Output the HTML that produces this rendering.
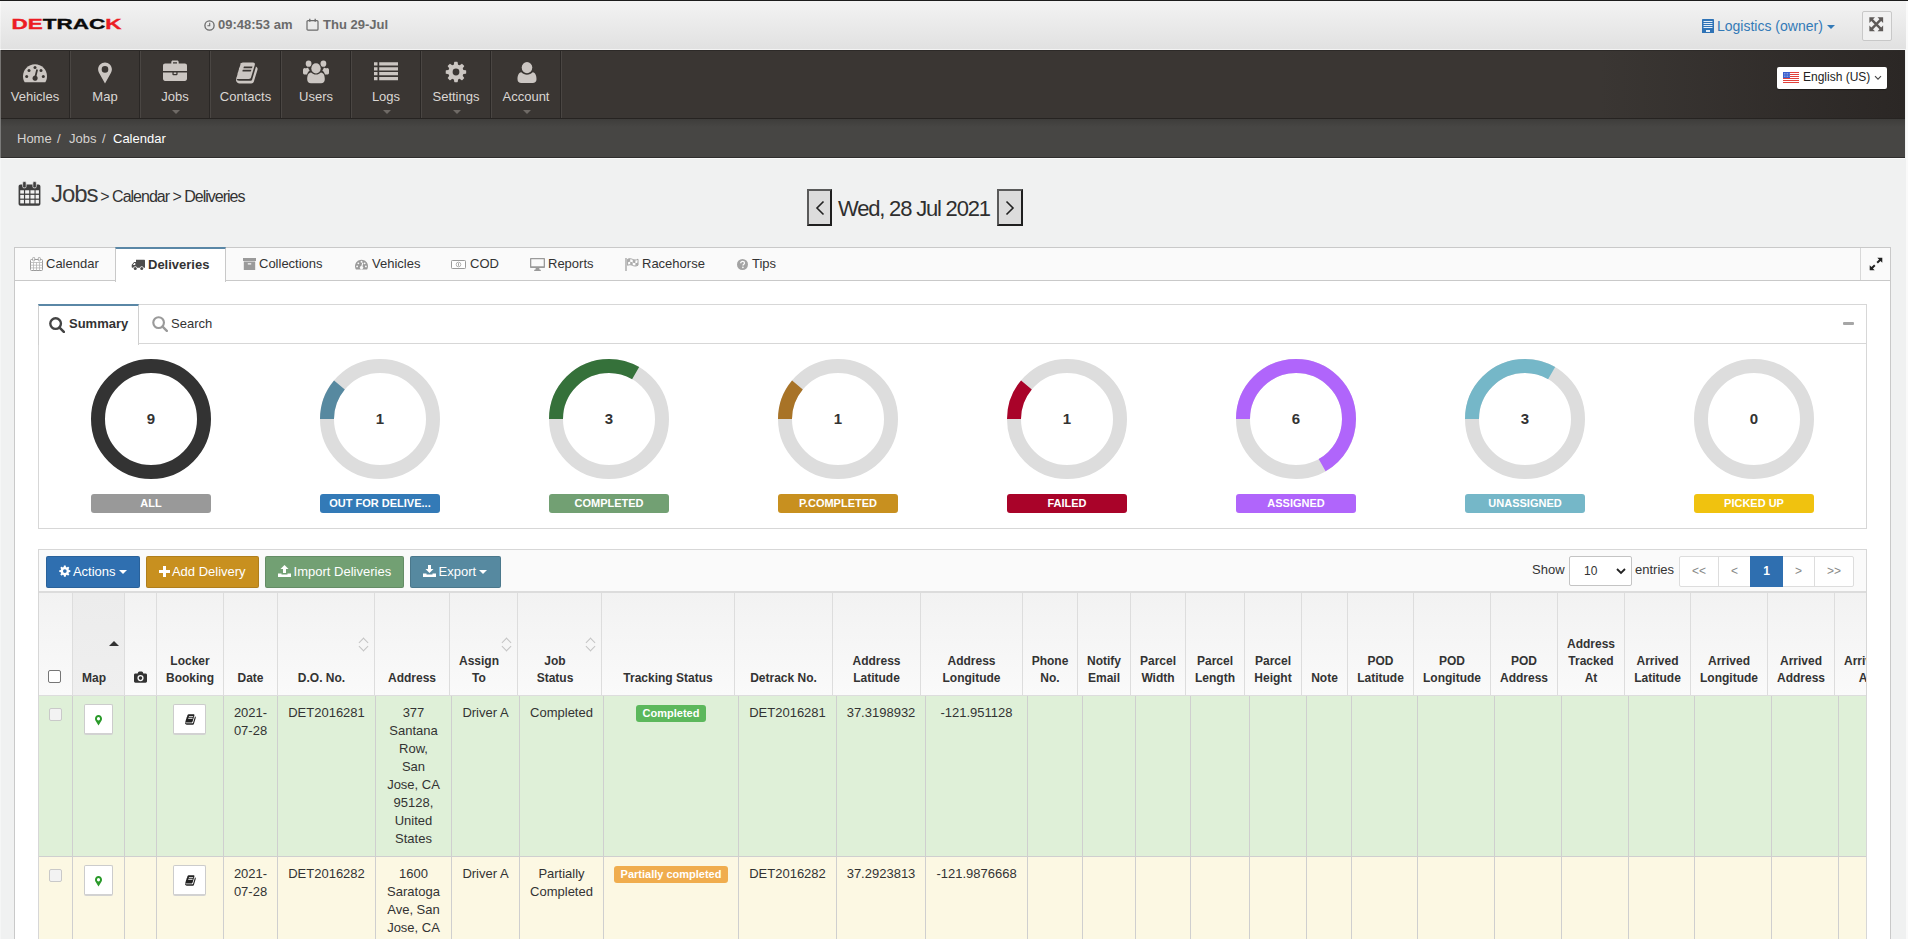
<!DOCTYPE html>
<html lang="en">
<head>
<meta charset="utf-8">
<title>Detrack - Jobs Calendar Deliveries</title>
<style>
*{box-sizing:border-box;margin:0;padding:0}
html,body{width:1908px;height:939px;overflow:hidden;background:#fafafa}
body{font-family:"Liberation Sans",Arial,Helvetica,sans-serif;font-size:13px;color:#333;position:relative}
svg{display:block}
.abs{position:absolute}
#leftline{position:absolute;left:0;top:0;width:1px;height:939px;background:linear-gradient(#f9f9f9 0,#ebebeb 49px,#fff 49px,#fff 50px,#767472 50px,#767472 119px,#7a7a79 119px,#7a7a79 158px,#f5f6f6 158px,#f5f6f6 100%);z-index:50}
#topline{position:absolute;left:0;top:0;width:1908px;height:1px;background:#1c1c1c;z-index:51}
#page{position:absolute;left:1px;top:0;width:1905px;height:939px;background:#f0f1f1;overflow:hidden}
/* header */
#hdr{position:absolute;left:0;top:1px;width:1905px;height:48px;background:linear-gradient(#f3f3f3,#e1e1e1)}
#hdrline{position:absolute;left:0;top:49px;width:1905px;height:1px;background:#f3f3f3}
#logo{position:absolute;left:10px;top:13px}
.hinfo{position:absolute;top:17px;font-size:13px;font-weight:bold;color:#6a6a6a;line-height:16px;white-space:nowrap}
#acct{position:absolute;top:17px;left:1716px;font-size:14px;color:#337ab7;line-height:18px;white-space:nowrap}
#fsbtn{position:absolute;left:1861px;top:11px;width:30px;height:30px;border:1px solid #c8c8c8;border-radius:2px;background:#f1f1f1}
/* nav */
#nav{position:absolute;left:0;top:50px;width:1904px;height:69px;background:linear-gradient(90deg,#3a3633 0%,#3a3633 84%,#2b2725 100%);border-top:1px solid #2d2a28;border-bottom:1px solid #262321}
.ni{position:absolute;top:0;width:70px;height:67px;border-right:1px solid #2a2725;box-shadow:1px 0 0 #4a4643;text-align:center;color:#dbd7d3;font-size:13px}
.ni svg{position:absolute;left:23px;top:10px}
.ni span{position:absolute;left:1px;right:0;top:38px;line-height:16px}
.ni i{position:absolute;left:32px;top:59px;width:0;height:0;border-left:4px solid transparent;border-right:4px solid transparent;border-top:4px solid #6f6a66}
#lang{position:absolute;left:1776px;top:66px;width:110px;height:22px;background:#fff;border-radius:2px;font-size:12px;color:#222;line-height:20px;white-space:nowrap;box-shadow:0 1px 1px rgba(0,0,0,.4)}
/* breadcrumb */
#bc{position:absolute;left:0;top:119px;width:1904px;height:39px;box-shadow:0 1px 0 #fafafa;background:linear-gradient(#3e3d3b 0,#474644 8px,#474644 100%);border-bottom:1px solid #2f2e2d;font-size:13px;color:#d6d3d0;line-height:39px;white-space:nowrap}
#bc span{position:absolute;top:0}
/* title */
#title{position:absolute;left:0;top:158px;width:1904px;height:89px}
#title .big{position:absolute;left:50px;top:178px}
/* widgets */
#w1{position:absolute;left:13px;top:247px;width:1877px;height:700px;background:#fff;border:1px solid #c9c9c9}
#w1h{position:absolute;left:0;top:0;width:1875px;height:33px;background:#fafafa;border-bottom:1px solid #c9c9c9}
.tab{position:absolute;top:0;height:32px;line-height:31px;font-size:13px;color:#333;white-space:nowrap}
.tab svg{display:inline-block;vertical-align:-2px;margin-right:3px}
#tabact{position:absolute;left:100px;top:-1px;width:111px;height:35px;background:#fff;border:1px solid #c9c9c9;border-top:2px solid #5a87a6;border-bottom:none;font-weight:bold;font-size:13px;line-height:33px;white-space:nowrap}
#w1x{position:absolute;left:1845px;top:0;width:30px;height:32px;border-left:1px solid #d8d8d8}
#w2{position:absolute;left:23px;top:56px;width:1829px;height:225px;border:1px solid #d7d7d7;background:#fff}
#w2h{position:absolute;left:0;top:0;width:1827px;height:39px;border-bottom:1px solid #d7d7d7;background:#fff}
#sumtab{position:absolute;left:-1px;top:-1px;width:101px;height:41px;background:#fff;border:1px solid #d0d0d0;border-top:2px solid #5a87a6;border-bottom:none;font-weight:bold;font-size:13px;line-height:37px;white-space:nowrap}
#srchtab{position:absolute;left:113px;top:0;font-size:13px;line-height:38px;white-space:nowrap}
.dn{position:absolute;top:9px;width:120px;height:150px}
.dn .num{position:absolute;left:0;width:120px;top:51px;text-align:center;font-weight:bold;font-size:15px;line-height:18px;color:#333}
.dn .lbl{position:absolute;left:0;top:135px;width:120px;height:19px;border-radius:3px;color:#fff;font-weight:bold;font-size:11px;line-height:19px;text-align:center;white-space:nowrap}
#w3{position:absolute;left:23px;top:301px;width:1829px;height:400px;border:1px solid #d7d7d7;border-bottom:none;background:#fff;overflow:hidden}
#tb{position:absolute;left:0;top:0;width:1827px;height:43px;background:#fafafa;border-bottom:2px solid #dcdcdc}
.btn{position:absolute;top:6px;height:32px;border-radius:2px;color:#fff;font-size:13px;line-height:30px;white-space:nowrap;border:1px solid rgba(0,0,0,.12)}
.btn span{display:inline-block;margin-right:-1px}.btn svg{display:inline-block;vertical-align:-1px}
.caret{display:inline-block;width:0;height:0;border-left:4px solid transparent;border-right:4px solid transparent;border-top:4px solid currentColor;vertical-align:2px;margin-left:3px}

/* table */
#thw{position:absolute;left:0;top:43px;width:1827px;height:103px;overflow:hidden;background:#fafafa}
#tbw{position:absolute;left:0;top:146px;width:1827px;height:300px;overflow:hidden}
table.dt{border-collapse:separate;border-spacing:0;table-layout:fixed}
table.dt th{height:103px;vertical-align:bottom;text-align:center;font-size:12px;font-weight:bold;line-height:17px;color:#333;padding:0 0 8px 0;border-right:1px solid #dddddd;border-bottom:1px solid #dddddd;background:linear-gradient(#f2f2f2,#fafafa);position:relative;overflow:hidden;white-space:nowrap}
table.dt th.srt{background:linear-gradient(#ececec,#efefef)}
table.dt th i.up{position:absolute;right:5px;top:48px;width:0;height:0;border-left:5px solid transparent;border-right:5px solid transparent;border-bottom:5px solid #333}
table.dt th i.ud{position:absolute;right:6px;top:44px;width:9px;height:14px}
table.dt th i.ud:before,table.dt th i.ud:after{content:"";position:absolute;left:1px;width:6px;height:6px;border-left:1px solid #c4c4c4;border-top:1px solid #c4c4c4}
table.dt th i.ud:before{top:2px;transform:rotate(45deg)}
table.dt th i.ud:after{top:6px;transform:rotate(225deg)}
table.db td{vertical-align:top;text-align:center;font-size:13px;line-height:18px;color:#333;padding:8px 2px 0 2px;border-right:1px solid #cfcfcf;border-bottom:1px solid #cfcfcf;overflow:hidden;white-space:nowrap}
tr.ok td{background:#dff0d8}
tr.pc td{background:#fcf8e3}
.cb{display:inline-block;width:13px;height:13px;border:1px solid #767676;border-radius:2px;background:#fff;vertical-align:top;margin-bottom:2px;margin-left:-2px}
.cb.dis{border-color:#c9c9c9;background:#f3f3f3;margin-top:4px;margin-left:-1px}
.ib{display:inline-block;width:29px;height:31px;border:1px solid #ccc;border-bottom:2px solid #d2d2d2;border-radius:2px;background:#fff;margin-top:0;position:relative}
.ib svg{position:absolute;left:10px;top:10px}
.ib.bk{width:33px;margin-left:-2px}
.ib.bk svg{left:10px;top:9px}
.tag{display:inline-block;height:17px;line-height:17px;padding:0 6.500px;border-radius:3px;color:#fff;font-size:11px;font-weight:bold;vertical-align:top;margin-top:1px}
/* toolbar right */
.tbr{position:absolute;top:0;font-size:13px;line-height:40px;color:#333;white-space:nowrap}
#sel{position:absolute;left:1530px;top:6px;width:63px;height:30px;border:1px solid #c4c4c4;border-radius:2px;background:#fff;font-size:12px;line-height:28px;color:#333}
#pag{position:absolute;left:1640px;top:6px;width:175px;height:31px;border:1px solid #ddd;border-radius:2px;background:#fff}
#pag span{position:absolute;top:0;height:29px;line-height:29px;text-align:center;font-size:12px;color:#888;border-right:1px solid #ddd}
table.dt th.sp{padding-right:9px}
</style>
</head>
<body>
<div id="page">
  <!-- HEADER -->
  <div id="hdr"></div><div id="hdrline"></div>
  <svg id="logo" width="116" height="22" viewBox="0 0 116 22">
    <text x=".5" y="15.500" font-family="Liberation Sans, Arial, sans-serif" font-weight="bold" font-size="14.800" textLength="110" lengthAdjust="spacingAndGlyphs" stroke-width=".35"><tspan fill="#ec1c24" stroke="#ec1c24">DE</tspan><tspan fill="#0a0a0a" stroke="#0a0a0a">TRAC</tspan><tspan fill="#ec1c24" stroke="#ec1c24">K</tspan></text>
  </svg>
  <div class="hinfo" style="left:203px">
    <svg class="abs" style="left:0;top:3px" width="11" height="11" viewBox="0 0 11 11"><circle cx="5.5" cy="5.5" r="4.6" fill="none" stroke="#6a6a6a" stroke-width="1.3"/><path d="M5.7 2.8v3H3.4" fill="none" stroke="#6a6a6a" stroke-width="1.1"/></svg>
    <span style="margin-left:14px">09:48:53 am</span>
  </div>
  <div class="hinfo" style="left:305px">
    <svg class="abs" style="left:0;top:1px" width="13" height="13" viewBox="0 0 13 13"><rect x="1" y="2.6" width="11" height="9.6" rx="1" fill="none" stroke="#6a6a6a" stroke-width="1.2"/><path d="M3.8 0.8v3M9.2 0.8v3" stroke="#6a6a6a" stroke-width="1.3"/></svg>
    <span style="margin-left:17px">Thu 29-Jul</span>
  </div>
  <div id="acct">
    <svg class="abs" style="left:-15px;top:2px" width="12" height="14" viewBox="0 0 12 14"><path d="M.6 0h10.800c.3 0 .6.300.6.600V14H0V.6C0 .3.300 0 .6 0z" fill="#2f73b6"/><g fill="#e4eef8"><rect x="1.500" y="2" width="9" height="1"/><rect x="1.500" y="4" width="9" height="1"/><rect x="1.500" y="6" width="9" height="1"/><rect x="1.500" y="8" width="9" height="1"/><rect x="4" y="11" width="4" height="2"/></g></svg>
    Logistics (owner) <span class="caret" style="margin-left:0;vertical-align:2px"></span>
  </div>
  <div id="fsbtn">
    <svg class="abs" style="left:6px;top:5px" width="14.500" height="14.500" viewBox="0 0 16 16"><path d="M3 3l10 10M13 3L3 13" stroke="#5e5a58" stroke-width="2.700"/><path d="M.4.400h6.200L.4 6.600zM15.600.4v6.200L9.400.4zM.4 15.600V9.400l6.200 6.200zM15.600 15.600H9.400l6.200-6.200z" fill="#5e5a58"/></svg>
  </div>

  <!-- NAV -->
  <div id="nav">
    <div class="ni" style="left:-1px">
      <svg width="24" height="24" viewBox="0 0 24 24"><path d="M12 3.2C5.4 3.2 0 8.6 0 15.2c0 2.2.6 4.3 1.7 6.100h20.600c1.100-1.800 1.700-3.900 1.700-6.100C24 8.600 18.600 3.200 12 3.200z" fill="#cbc6c2"/><g fill="#3a3633"><circle cx="3.700" cy="15.500" r="1.500"/><circle cx="6" cy="9.600" r="1.500"/><circle cx="12" cy="6.600" r="1.500"/><circle cx="18" cy="9.600" r="1.500"/><circle cx="20.300" cy="15.500" r="1.500"/><path d="M13.300 8.300l1.700.4-1.500 6.300a2.600 2.600 0 1 1-1.700-.4z"/></g></svg>
      <span>Vehicles</span>
    </div>
    <div class="ni" style="left:69px">
      <svg width="24" height="24" viewBox="0 0 24 24"><path d="M12 1.500c-3.800 0-6.900 3-6.900 6.800 0 1.300.3 2.300.9 3.400L12 22.500l6-10.800c.6-1.100.9-2.100.9-3.400 0-3.800-3.100-6.800-6.900-6.800zm0 3.600a3.300 3.300 0 1 1 0 6.600 3.300 3.300 0 0 1 0-6.600z" fill="#cbc6c2" fill-rule="evenodd"/></svg>
      <span>Map</span>
    </div>
    <div class="ni" style="left:139px">
      <svg width="24" height="24" viewBox="0 0 24 24" style="top:8px"><path d="M8.300 4.600V3.200c0-.9.700-1.600 1.600-1.600h4.200c.9 0 1.600.7 1.600 1.600v1.400h6.200c1.200 0 2.100.9 2.100 2.100v5.400H0V6.700c0-1.200.9-2.100 2.100-2.100zm1.700 0h4V3.300h-4zM0 13.600h9.400v1.700c0 .5.400.9.900.9h3.400c.5 0 .9-.4.900-.9v-1.700H24v6.200c0 1.200-.9 2.100-2.100 2.100H2.100C.9 21.900 0 21 0 19.800zm10.700 0h2.600v1.300h-2.600z" fill="#cbc6c2" fill-rule="evenodd"/></svg>
      <span>Jobs</span><i></i>
    </div>
    <div class="ni" style="left:209px;width:71px">
      <svg width="24" height="24" viewBox="0 0 24 24" style="left:24px"><path d="M23.200 6.800c.4.500.5 1.200.3 1.900l-3.600 11.700c-.3 1.100-1.500 2-2.600 2H5.400c-1.300 0-2.700-1-3.200-2.400-.2-.600-.2-1.100 0-1.600 0-.3.100-.5.100-.8 0-.2-.1-.3-.1-.5.100-.4.400-.7.500-1.100.4-1.300.8-2.400.9-3.300 0-.3-.1-.4 0-.7.100-.3.400-.5.500-.9.300-1 .8-2.500.9-3.300 0-.2-.1-.5 0-.7.100-.3.400-.5.600-.8.300-.7.800-2.500.9-3.300 0-.3-.1-.5 0-.7C7.800 1.700 8.500 1.500 9.300 1.500h9.800c.6 0 1.100.2 1.400.6.400.5.500 1.200.3 1.900l-3.500 11.600c-.6 2-.9 2.400-2.600 2.400H3.500c-.2 0-.4 0-.5.200-.1.200-.1.300 0 .6.300.8 1.200.9 1.900.9h11.900c.5 0 1-.3 1.200-.7l3.800-12.700c.1-.2.100-.5.100-.7.300.1.500.3.700.5zM9.500 6.800c-.1.200.1.400.3.400h7.800c.2 0 .5-.2.500-.4l.3-.9c.1-.2-.1-.4-.3-.4h-7.800c-.2 0-.5.200-.5.400zM8.400 10c-.1.200.1.400.3.400h7.800c.2 0 .5-.2.500-.4l.3-.9c.1-.2-.1-.4-.3-.4H9.200c-.2 0-.5.200-.5.400z" fill="#cbc6c2" fill-rule="evenodd"/></svg>
      <span>Contacts</span>
    </div>
    <div class="ni" style="left:280px">
      <svg width="26" height="26" viewBox="0 0 26 24" preserveAspectRatio="none" style="left:22px;top:8px"><g fill="#cbc6c2"><circle cx="5.600" cy="4.300" r="2.900"/><circle cx="20.400" cy="4.300" r="2.900"/><path d="M1.600 8.300c-1.400 0-1.800 1.800-1.800 3.700 0 1.400.8 2.200 2 2.200h2.300c.300-1.600 1.300-2.900 2.600-3.700-.900-.800-1.400-1.600-1.600-2.600-1 .700-2.400.700-3.500.400zM24.400 8.300c1.400 0 1.800 1.800 1.800 3.700 0 1.400-.8 2.200-2 2.200h-2.300c-.300-1.600-1.300-2.900-2.600-3.700.900-.800 1.400-1.600 1.600-2.600 1 .700 2.400.700 3.500.400z"/><circle cx="13" cy="8.700" r="4.700"/><path d="M8.100 12.400c-2.800.300-3.900 2.800-3.900 6.300 0 2.300 1.500 3.700 3.700 3.700h10.200c2.200 0 3.700-1.400 3.700-3.700 0-3.500-1.100-6-3.900-6.300-1.300 1.200-3 1.900-4.900 1.900s-3.600-.700-4.900-1.900z"/></g></svg>
      <span>Users</span>
    </div>
    <div class="ni" style="left:350px">
      <svg width="24" height="24" viewBox="0 0 24 24" style="top:8px"><path d="M0 3.300h3.500v3.200H0zM5.200 3.300H24v3.200H5.200zM0 8.200h3.500v3.200H0zM5.200 8.200H24v3.200H5.200zM0 13.100h3.500v3.200H0zM5.200 13.100H24v3.200H5.200zM0 18h3.500v3.200H0zM5.200 18H24v3.200H5.200z" fill="#cbc6c2"/></svg>
      <span>Logs</span><i></i>
    </div>
    <div class="ni" style="left:420px">
      <svg width="22" height="22" viewBox="0 0 24 24" style="left:24px;top:10px"><path d="M22.300 10.300l-2.600-.4c-.2-.6-.4-1.200-.7-1.700l1.500-2.100c.2-.2.200-.5 0-.7l-2-2c-.2-.2-.5-.2-.7 0l-2.100 1.500c-.6-.3-1.200-.6-1.800-.7l-.4-2.600c0-.3-.3-.5-.5-.5h-2.800c-.3 0-.5.200-.5.500l-.4 2.600c-.6.200-1.200.4-1.700.7L5.500 3.400c-.2-.2-.5-.2-.7 0l-2 2c-.2.200-.2.500 0 .7l1.500 2.100c-.3.600-.6 1.200-.7 1.800l-2.600.4c-.3 0-.5.300-.5.500v2.800c0 .3.200.5.500.5l2.600.4c.2.600.4 1.200.7 1.700l-1.500 2.100c-.2.200-.2.500 0 .7l2 2c.2.200.5.200.7 0l2.100-1.500c.6.300 1.200.6 1.800.7l.4 2.600c0 .3.300.5.500.5h2.800c.3 0 .5-.2.500-.5l.4-2.600c.6-.2 1.200-.4 1.700-.7l2.100 1.500c.2.200.5.200.7 0l2-2c.2-.2.200-.5 0-.7l-1.500-2.100c.3-.6.600-1.200.7-1.800l2.600-.4c.3 0 .5-.3.5-.5v-2.800c0-.3-.2-.5-.5-.5zM11.700 15.900a3.700 3.700 0 1 1 0-7.400 3.700 3.700 0 0 1 0 7.400z" fill="#cbc6c2" fill-rule="evenodd" transform="translate(.3 -.2)"/></svg>
      <span>Settings</span><i></i>
    </div>
    <div class="ni" style="left:490px">
      <svg width="24" height="25" viewBox="0 0 24 24" preserveAspectRatio="none" style="left:24px;top:9px"><g fill="#cbc6c2"><circle cx="12" cy="7.300" r="5.300"/><path d="M6.300 11.700c-2.900.500-3.800 3.600-3.800 6.700 0 2.400 1.600 3.700 3.800 3.700h11.400c2.200 0 3.800-1.300 3.800-3.700 0-3.100-.9-6.200-3.800-6.700-1.500 1.500-3.500 2.400-5.700 2.400s-4.200-.9-5.700-2.400z"/></g></svg>
      <span>Account</span><i></i>
    </div>
    <div id="lang" style="top:16px">
      <svg class="abs" style="left:6px;top:5px" width="16" height="11" viewBox="0 0 16 11"><rect width="16" height="11" fill="#fff"/><path d="M0 .5h16M0 2.500h16M0 4.500h16M0 6.500h16M0 8.500h16M0 10.500h16" stroke="#e2403a" stroke-width="1"/><rect width="7" height="6" fill="#3a5fcd"/><path d="M1 1.500h5.500M1 3h5.500M1 4.500h5.500" stroke="#c9d4f4" stroke-width=".6" stroke-dasharray=".8 .8"/></svg>
      <span style="margin-left:26px">English (US)</span>
      <svg class="abs" style="left:97px;top:8px" width="8" height="6" viewBox="0 0 8 6"><path d="M1 1.200l3 3 3-3" fill="none" stroke="#444" stroke-width="1.100"/></svg>
    </div>
  </div>

  <!-- BREADCRUMB -->
  <div id="bc">
    <span style="left:16px">Home</span><span style="left:56px">/</span><span style="left:68px">Jobs</span><span style="left:101px">/</span><span style="left:112px;color:#fff">Calendar</span>
  </div>

  <!-- TITLE -->
  <svg class="abs" style="left:17px;top:181px" width="23" height="25" viewBox="0 0 24 27"><path d="M2.300 3.800h19.400c1.200 0 2.100.9 2.100 2.100v18.600c0 1.200-.9 2.100-2.100 2.100H2.300C1.100 26.600.2 25.700.2 24.500V5.900c0-1.200.9-2.100 2.100-2.100z" fill="#3f3f3f"/><g fill="#f1f1f1"><rect x="2" y="10" width="4" height="3.600"/><rect x="7.300" y="10" width="4.400" height="3.600"/><rect x="13" y="10" width="4.400" height="3.600"/><rect x="18.600" y="10" width="3.600" height="3.600"/><rect x="2" y="15" width="4" height="4"/><rect x="7.300" y="15" width="4.400" height="4"/><rect x="13" y="15" width="4.400" height="4"/><rect x="18.600" y="15" width="3.600" height="4"/><rect x="2" y="20.300" width="4" height="3.900"/><rect x="7.300" y="20.300" width="4.400" height="3.900"/><rect x="13" y="20.300" width="4.400" height="3.900"/><rect x="18.600" y="20.300" width="3.600" height="3.900"/></g><rect x="4.600" y=".6" width="3.800" height="6.800" rx="1.400" fill="#3f3f3f" stroke="#eee" stroke-width=".8"/><rect x="15.600" y=".6" width="3.800" height="6.800" rx="1.400" fill="#3f3f3f" stroke="#eee" stroke-width=".8"/></svg>
  <div class="abs" style="left:50px;top:179px;font-size:24px;line-height:30px;color:#3a3a3a;letter-spacing:-1.100px;white-space:nowrap">Jobs<span style="font-size:16px;letter-spacing:-1px;color:#333;margin-left:3px">&gt; Calendar &gt; Deliveries</span></div>
  <!-- date nav -->
  <div class="abs" style="left:806px;top:189px;width:25px;height:37px;border:2px solid #5a5a5a;border-right-color:#1f1f1f;border-bottom-color:#1f1f1f;background:#dcdcdc"><svg class="abs" style="left:6px;top:9px" width="10" height="16" viewBox="0 0 10 16"><path d="M8.500 1.500L2 8l6.500 6.500" fill="none" stroke="#222" stroke-width="1.600"/></svg></div>
  <div class="abs" style="left:837px;top:194px;font-size:22px;line-height:30px;color:#2f2f2f;letter-spacing:-1.190px;white-space:nowrap">Wed, 28 Jul 2021</div>
  <div class="abs" style="left:996px;top:189px;width:26px;height:37px;border:2px solid #5a5a5a;border-right-color:#1f1f1f;border-bottom-color:#1f1f1f;background:#dcdcdc"><svg class="abs" style="left:6px;top:9px" width="10" height="16" viewBox="0 0 10 16"><path d="M1.500 1.500L8 8l-6.500 6.500" fill="none" stroke="#222" stroke-width="1.600"/></svg></div>

  <!-- MAIN WIDGET -->
  <div id="w1">
    <div id="w1h">
      <div class="tab" style="left:31px">Calendar</div>
      <svg class="abs" style="left:15px;top:9px" width="13" height="14" viewBox="0 0 13 14"><rect x=".5" y="2.500" width="12" height="11" rx="1" fill="#fff" stroke="#9a9a9a"/><path d="M.5 5.500h12M.5 8.200h12M.5 10.900h12M3.500 5.500v8M6.500 5.500v8M9.500 5.500v8" stroke="#b5b5b5" stroke-width=".8"/><rect x="2.700" y=".4" width="2" height="3.600" rx=".8" fill="#fff" stroke="#9a9a9a" stroke-width=".8"/><rect x="8.300" y=".4" width="2" height="3.600" rx=".8" fill="#fff" stroke="#9a9a9a" stroke-width=".8"/></svg>
      <div id="tabact"><svg class="abs" style="left:15px;top:10px" width="14" height="12" viewBox="0 0 14 12"><path d="M5 .8h8.300c.4 0 .7.300.7.700v7.300h-1.300a2 2 0 0 0-3.900 0H6.200a2 2 0 0 0-3.900 0H1.400c-.4 0-.7-.3-.7-.7V6.300c0-.3.100-.6.300-.8l1.700-2.100c.2-.3.500-.4.900-.4H5zM2 6h2.300V3.900H3.700c-.2 0-.3.100-.4.200L2 5.700z" fill="#4d4d4d" fill-rule="evenodd"/><circle cx="4.250" cy="9.500" r="1.500" fill="#4d4d4d"/><circle cx="10.750" cy="9.500" r="1.500" fill="#4d4d4d"/></svg><span style="position:absolute;left:32px;top:-1px">Deliveries</span></div>
      <svg class="abs" style="left:228px;top:10px" width="13" height="12" viewBox="0 0 13 12"><path d="M0 0h13v3H0zM.8 3.600h11.400V12H.8zM4.800 5.200h3.400v1.200H4.800z" fill="#9a9a9a" fill-rule="evenodd"/></svg>
      <div class="tab" style="left:244px">Collections</div>
      <svg class="abs" style="left:340px;top:11px" width="13" height="11" viewBox="0 0 24 20"><path d="M12 1.200C5.400 1.200 0 6.600 0 13.200c0 2.200.6 4.300 1.700 6.100h20.600c1.100-1.800 1.700-3.900 1.700-6.100C24 6.600 18.600 1.200 12 1.200z" fill="#9a9a9a"/><g fill="#fafafa"><circle cx="3.900" cy="13.500" r="1.700"/><circle cx="6.200" cy="7.800" r="1.700"/><circle cx="12" cy="5" r="1.700"/><circle cx="17.800" cy="7.800" r="1.700"/><circle cx="20.100" cy="13.500" r="1.700"/><path d="M13.400 6.500l2 .5-1.700 6.300a3 3 0 1 1-2-.5z"/></g></svg>
      <div class="tab" style="left:357px">Vehicles</div>
      <svg class="abs" style="left:436px;top:12px" width="15" height="9" viewBox="0 0 15 9"><rect x=".5" y=".5" width="14" height="8" rx=".8" fill="#fff" stroke="#9a9a9a"/><circle cx="7.500" cy="4.500" r="2.300" fill="none" stroke="#aaa" stroke-width=".9"/><path d="M7.500 3.200v2.600" stroke="#999" stroke-width=".9"/></svg>
      <div class="tab" style="left:455px">COD</div>
      <svg class="abs" style="left:515px;top:10px" width="15" height="13" viewBox="0 0 15 13"><path d="M1 0h13c.6 0 1 .4 1 1v8c0 .6-.4 1-1 1H9.200l.5 1.700h1.100V13H4.200v-1.300h1.100L5.800 10H1c-.6 0-1-.4-1-1V1c0-.6.400-1 1-1zm.3 1.300v7h12.400v-7z" fill="#9a9a9a" fill-rule="evenodd"/></svg>
      <div class="tab" style="left:533px">Reports</div>
      <svg class="abs" style="left:610px;top:10px" width="14" height="13" viewBox="0 0 14 13"><path d="M1 0v13" stroke="#9a9a9a" stroke-width="1.200"/><path d="M2.600 1.300c1.800-.9 3.400-.6 5 .1s3.300 1 5.400-.2v6c-2.100 1.200-3.800.9-5.400.2s-3.200-1-5-.1z" fill="#fff" stroke="#9a9a9a" stroke-width=".9"/><path d="M2.600 1.300c.9-.4 1.800-.6 2.600-.5v3c-.8-.1-1.700.1-2.600.5zM5.200 3.800c.9.100 1.700.4 2.500.700v3c-.8-.3-1.600-.6-2.500-.7zM7.700 1.500c.9.400 1.800.7 2.700.7v3c-.9 0-1.800-.3-2.700-.7zM10.400 5.200c.8 0 1.700-.3 2.600-.8v2.800c-.9.500-1.800.8-2.600.8z" fill="#ababab"/></svg>
      <div class="tab" style="left:627px">Racehorse</div>
      <svg class="abs" style="left:722px;top:11px" width="11" height="11" viewBox="0 0 11 11"><circle cx="5.500" cy="5.500" r="5.500" fill="#a3a3a3"/><path d="M3.700 4.200c0-1.100.8-1.800 1.900-1.800s1.900.6 1.900 1.600c0 1.300-1.500 1.300-1.500 2.600" fill="none" stroke="#fafafa" stroke-width="1.300"/><circle cx="5.900" cy="8.300" r=".85" fill="#fafafa"/></svg>
      <div class="tab" style="left:737px">Tips</div>
      <div id="w1x"><svg class="abs" style="left:8px;top:9px" width="14" height="14" viewBox="0 0 14 14"><path d="M8.300.7h5v5l-1.800-1.800-2.600 2.600-1.400-1.400 2.600-2.600zM5.700 13.300h-5v-5l1.800 1.800 2.600-2.600 1.400 1.400-2.600 2.600z" fill="#222"/></svg></div>
    </div>
    <!-- SUMMARY WIDGET -->
    <div id="w2">
      <div id="w2h">
        <div id="sumtab"><svg class="abs" style="left:10px;top:11px" width="16" height="16" viewBox="0 0 15 15"><circle cx="6.200" cy="6.200" r="5" fill="none" stroke="#444" stroke-width="2.200"/><path d="M9.900 9.900l4 4" stroke="#444" stroke-width="2.400" stroke-linecap="round"/></svg><span style="position:absolute;left:30px;top:-1px">Summary</span></div>
        <div id="srchtab"><svg class="abs" style="left:0;top:11px" width="16" height="16" viewBox="0 0 15 15"><circle cx="6.200" cy="6.200" r="5" fill="none" stroke="#9a9a9a" stroke-width="2"/><path d="M9.900 9.900l4 4" stroke="#9a9a9a" stroke-width="2.200" stroke-linecap="round"/></svg><span style="margin-left:19px">Search</span></div><svg class="abs" style="left:1804px;top:17px" width="11" height="3" viewBox="0 0 11 3"><rect width="11" height="3" rx="1" fill="#a6a6a6"/></svg>
      </div>
      <!--DONUTS--><div class="dn" style="left:52px;top:54px"><svg width="120" height="120" viewBox="0 0 120 120"><circle cx="60" cy="60" r="53" fill="none" stroke="#333333" stroke-width="14"/></svg><div class="num">9</div><div class="lbl" style="background:#999999">ALL</div></div>
      <div class="dn" style="left:281px;top:54px"><svg width="120" height="120" viewBox="0 0 120 120"><circle cx="60" cy="60" r="53" fill="none" stroke="#dddddd" stroke-width="14"/><circle cx="60" cy="60" r="53" fill="none" stroke="#5789a0" stroke-width="14" stroke-dasharray="37.00 333.01" transform="rotate(180 60 60)"/></svg><div class="num">1</div><div class="lbl" style="background:#337ab7">OUT FOR DELIVE...</div></div>
      <div class="dn" style="left:510px;top:54px"><svg width="120" height="120" viewBox="0 0 120 120"><circle cx="60" cy="60" r="53" fill="none" stroke="#dddddd" stroke-width="14"/><circle cx="60" cy="60" r="53" fill="none" stroke="#35713a" stroke-width="14" stroke-dasharray="111.00 333.01" transform="rotate(180 60 60)"/></svg><div class="num">3</div><div class="lbl" style="background:#72a073">COMPLETED</div></div>
      <div class="dn" style="left:739px;top:54px"><svg width="120" height="120" viewBox="0 0 120 120"><circle cx="60" cy="60" r="53" fill="none" stroke="#dddddd" stroke-width="14"/><circle cx="60" cy="60" r="53" fill="none" stroke="#a87327" stroke-width="14" stroke-dasharray="37.00 333.01" transform="rotate(180 60 60)"/></svg><div class="num">1</div><div class="lbl" style="background:#c8901f">P.COMPLETED</div></div>
      <div class="dn" style="left:968px;top:54px"><svg width="120" height="120" viewBox="0 0 120 120"><circle cx="60" cy="60" r="53" fill="none" stroke="#dddddd" stroke-width="14"/><circle cx="60" cy="60" r="53" fill="none" stroke="#a90329" stroke-width="14" stroke-dasharray="37.00 333.01" transform="rotate(180 60 60)"/></svg><div class="num">1</div><div class="lbl" style="background:#a90329">FAILED</div></div>
      <div class="dn" style="left:1197px;top:54px"><svg width="120" height="120" viewBox="0 0 120 120"><circle cx="60" cy="60" r="53" fill="none" stroke="#dddddd" stroke-width="14"/><circle cx="60" cy="60" r="53" fill="none" stroke="#b065fb" stroke-width="14" stroke-dasharray="222.01 333.01" transform="rotate(180 60 60)"/></svg><div class="num">6</div><div class="lbl" style="background:#b065fb">ASSIGNED</div></div>
      <div class="dn" style="left:1426px;top:54px"><svg width="120" height="120" viewBox="0 0 120 120"><circle cx="60" cy="60" r="53" fill="none" stroke="#dddddd" stroke-width="14"/><circle cx="60" cy="60" r="53" fill="none" stroke="#75b7c8" stroke-width="14" stroke-dasharray="111.00 333.01" transform="rotate(180 60 60)"/></svg><div class="num">3</div><div class="lbl" style="background:#75b7c8">UNASSIGNED</div></div>
      <div class="dn" style="left:1655px;top:54px"><svg width="120" height="120" viewBox="0 0 120 120"><circle cx="60" cy="60" r="53" fill="none" stroke="#dddddd" stroke-width="14"/></svg><div class="num">0</div><div class="lbl" style="background:#f0c20f">PICKED UP</div></div><!--/DONUTS-->
    </div>
    <!-- TABLE WIDGET -->
    <div id="w3">
      <div id="tb">
        <div class="btn" style="left:7px;width:94px;background:#2f6fb0"><span style="margin-left:12px"><svg width="12" height="12" viewBox="0 0 24 24"><path d="M22.300 10.300l-2.600-.4c-.2-.6-.4-1.200-.7-1.700l1.500-2.100c.2-.2.200-.5 0-.7l-2-2c-.2-.2-.5-.2-.7 0l-2.100 1.500c-.6-.3-1.200-.6-1.800-.7l-.4-2.600c0-.3-.3-.5-.5-.5h-2.800c-.3 0-.5.200-.5.500l-.4 2.600c-.6.200-1.200.4-1.700.7L5.500 3.400c-.2-.2-.5-.2-.7 0l-2 2c-.2.200-.2.500 0 .7l1.500 2.100c-.3.600-.6 1.200-.7 1.800l-2.600.4c-.3 0-.5.300-.5.500v2.800c0 .3.200.5.500.5l2.600.4c.2.600.4 1.200.7 1.700l-1.500 2.100c-.2.200-.2.500 0 .7l2 2c.2.200.5.200.7 0l2.100-1.500c.6.300 1.200.6 1.800.7l.4 2.600c0 .3.300.5.500.5h2.800c.3 0 .5-.2.500-.5l.4-2.600c.6-.2 1.200-.4 1.700-.7l2.100 1.500c.2.200.5.200.7 0l2-2c.2-.2.200-.5 0-.7l-1.500-2.100c.3-.6.600-1.200.7-1.800l2.600-.4c.3 0 .5-.3.5-.5v-2.800c0-.3-.2-.5-.5-.5zM11.700 15.900a3.700 3.700 0 1 1 0-7.400 3.700 3.700 0 0 1 0 7.400z" fill="#fff" fill-rule="evenodd"/></svg></span> Actions<span class="caret"></span></div>
        <div class="btn" style="left:107px;width:113px;background:#c8901f"><span style="margin-left:12px"><svg width="11" height="11" viewBox="0 0 11 11"><path d="M4 0h3v4h4v3H7v4H4V7H0V4h4z" fill="#fff"/></svg></span> Add Delivery</div>
        <div class="btn" style="left:226px;width:139px;background:#72a073"><span style="margin-left:12px"><svg width="13" height="12" viewBox="0 0 13 12"><path d="M6.500 0l4 4H8v4H5V4H2.500zM0 8.500h3.500v1h6v-1H13V12H0z" fill="#fff"/></svg></span> Import Deliveries</div>
        <div class="btn" style="left:371px;width:91px;background:#5689a0"><span style="margin-left:12px"><svg width="13" height="12" viewBox="0 0 13 12"><path d="M5 0h3v4h2.500l-4 4-4-4H5zM0 8.500h3.500v1h6v-1H13V12H0z" fill="#fff"/></svg></span> Export<span class="caret"></span></div>
        <div class="tbr" style="left:1493px">Show</div>
        <div id="sel"><span style="margin-left:14px">10</span><svg class="abs" style="left:46px;top:11px" width="10" height="7" viewBox="0 0 10 7"><path d="M1 1l4 4 4-4" fill="none" stroke="#222" stroke-width="1.800"/></svg></div>
        <div class="tbr" style="left:1596px">entries</div>
        <div id="pag"><span style="left:0;width:39px">&lt;&lt;</span><span style="left:39px;width:32px">&lt;</span><span style="left:70px;width:33px;top:-1px;height:31px;line-height:31px;background:#2f6fb0;color:#fff;border:none;font-weight:bold">1</span><span style="left:103px;width:32px">&gt;</span><span style="left:135px;width:38px;border:none">&gt;&gt;</span></div>
      </div>
      <!--TABLE--><div id="thw"><table class="dt" style="width:1857px"><colgroup><col style="width:34px"><col style="width:52px"><col style="width:32px"><col style="width:67px"><col style="width:54px"><col style="width:97px"><col style="width:75px"><col style="width:68px"><col style="width:84px"><col style="width:133px"><col style="width:98px"><col style="width:88px"><col style="width:102px"><col style="width:55px"><col style="width:53px"><col style="width:55px"><col style="width:59px"><col style="width:57px"><col style="width:46px"><col style="width:66px"><col style="width:77px"><col style="width:67px"><col style="width:67px"><col style="width:66px"><col style="width:77px"><col style="width:67px"><col style="width:61px"></colgroup><thead><tr><th><span class="cb"></span></th><th class="srt sp"><i class="up"></i>Map</th><th><svg width="13" height="12" viewBox="0 0 13 12" style="margin:0 auto 4px"><path d="M4.300 1.100L3.600 2.600H1.400C.6 2.600 0 3.200 0 4v6.300c0 .8.600 1.400 1.400 1.400h10.200c.8 0 1.400-.6 1.400-1.400V4c0-.8-.6-1.400-1.400-1.400H9.400L8.700 1.100C8.500.7 8.100.4 7.700.4H5.300c-.4 0-.8.300-1 .7zM6.500 4a3.100 3.100 0 1 1 0 6.200 3.100 3.100 0 0 1 0-6.200zm0 1.300a1.800 1.800 0 1 0 0 3.600 1.800 1.800 0 0 0 0-3.600z" fill="#333" fill-rule="evenodd"/></svg></th><th>Locker<br>Booking</th><th>Date</th><th class="sp"><i class="ud"></i>D.O. No.</th><th>Address</th><th class="sp"><i class="ud"></i>Assign<br>To</th><th class="sp"><i class="ud"></i>Job<br>Status</th><th>Tracking Status</th><th>Detrack No.</th><th>Address<br>Latitude</th><th>Address<br>Longitude</th><th>Phone<br>No.</th><th>Notify<br>Email</th><th>Parcel<br>Width</th><th>Parcel<br>Length</th><th>Parcel<br>Height</th><th>Note</th><th>POD<br>Latitude</th><th>POD<br>Longitude</th><th>POD<br>Address</th><th>Address<br>Tracked<br>At</th><th>Arrived<br>Latitude</th><th>Arrived<br>Longitude</th><th>Arrived<br>Address</th><th>Arrived<br>At</th></tr></thead></table></div>
      <div id="tbw"><table class="dt db" style="width:1872px"><colgroup><col style="width:34px"><col style="width:52px"><col style="width:32px"><col style="width:67px"><col style="width:54px"><col style="width:98px"><col style="width:76px"><col style="width:68px"><col style="width:84px"><col style="width:135px"><col style="width:98px"><col style="width:89px"><col style="width:102px"><col style="width:55px"><col style="width:53px"><col style="width:55px"><col style="width:59px"><col style="width:57px"><col style="width:45px"><col style="width:66px"><col style="width:77px"><col style="width:67px"><col style="width:67px"><col style="width:66px"><col style="width:77px"><col style="width:67px"><col style="width:72px"></colgroup><tbody><tr class="ok" style="height:161px"><td><span class="cb dis"></span></td><td><span class="ib"><svg width="7" height="10.500" viewBox="0 0 8 11" preserveAspectRatio="none"><path d="M4 0C1.800 0 0 1.700 0 3.900c0 .7.200 1.300.5 1.900L4 11l3.500-5.200c.3-.6.5-1.200.5-1.900C8 1.700 6.200 0 4 0zm0 2.100a1.800 1.800 0 1 1 0 3.600 1.800 1.800 0 0 1 0-3.600z" fill="#2a9a2a" fill-rule="evenodd"/></svg></span></td><td></td><td><span class="ib bk"><svg width="12" height="11" viewBox="0 0 24 22"><path d="M23.200 5.800c.4.500.5 1.200.3 1.900l-3.600 11.700c-.3 1.100-1.500 2-2.600 2H5.400c-1.300 0-2.700-1-3.200-2.400-.2-.6-.2-1.100 0-1.600l1.900-7.100c.1-.3.400-.5.500-.9l.9-3.300c.1-.3.400-.5.600-.8l.9-3.300C7.800.7 8.500.5 9.300.5h9.800c.6 0 1.100.2 1.400.6.400.5.500 1.200.3 1.900l-3.500 11.600c-.6 2-.9 2.400-2.600 2.400H3.500c-.2 0-.4 0-.5.200-.1.200-.1.300 0 .6.300.8 1.200.9 1.900.9h11.900c.5 0 1-.3 1.200-.7l3.800-12.700c.1-.2.100-.5.100-.7.300.1.500.3.700.5zM9.500 5.800c-.1.200.1.400.3.400h7.800c.2 0 .5-.2.500-.4l.3-.9c.1-.2-.1-.4-.3-.4h-7.800c-.2 0-.5.200-.5.400zM8.400 9c-.1.200.1.400.3.400h7.800c.2 0 .5-.2.500-.4l.3-.9c.1-.2-.1-.4-.3-.4H9.200c-.2 0-.5.200-.5.400z" fill="#222" fill-rule="evenodd"/></svg></span></td><td>2021-<br>07-28</td><td>DET2016281</td><td>377<br>Santana<br>Row,<br>San<br>Jose, CA<br>95128,<br>United<br>States</td><td>Driver A</td><td>Completed</td><td><span class="tag" style="background:#5cb85c">Completed</span></td><td>DET2016281</td><td>37.3198932</td><td>-121.951128</td><td></td><td></td><td></td><td></td><td></td><td></td><td></td><td></td><td></td><td></td><td></td><td></td><td></td><td></td></tr><tr class="pc" style="height:161px"><td><span class="cb dis"></span></td><td><span class="ib"><svg width="7" height="10.500" viewBox="0 0 8 11" preserveAspectRatio="none"><path d="M4 0C1.800 0 0 1.700 0 3.900c0 .7.200 1.300.5 1.900L4 11l3.500-5.200c.3-.6.5-1.200.5-1.900C8 1.700 6.200 0 4 0zm0 2.100a1.800 1.800 0 1 1 0 3.600 1.800 1.800 0 0 1 0-3.600z" fill="#2a9a2a" fill-rule="evenodd"/></svg></span></td><td></td><td><span class="ib bk"><svg width="12" height="11" viewBox="0 0 24 22"><path d="M23.200 5.800c.4.500.5 1.200.3 1.900l-3.600 11.700c-.3 1.100-1.500 2-2.600 2H5.400c-1.300 0-2.700-1-3.200-2.400-.2-.6-.2-1.100 0-1.600l1.900-7.100c.1-.3.400-.5.500-.9l.9-3.300c.1-.3.400-.5.600-.8l.9-3.300C7.800.7 8.500.5 9.300.5h9.800c.6 0 1.100.2 1.400.6.400.5.500 1.200.3 1.900l-3.500 11.600c-.6 2-.9 2.400-2.600 2.400H3.500c-.2 0-.4 0-.5.200-.1.200-.1.300 0 .6.300.8 1.200.9 1.900.9h11.900c.5 0 1-.3 1.200-.7l3.800-12.700c.1-.2.100-.5.100-.7.300.1.500.3.700.5zM9.500 5.800c-.1.200.1.400.3.400h7.800c.2 0 .5-.2.500-.4l.3-.9c.1-.2-.1-.4-.3-.4h-7.800c-.2 0-.5.200-.5.400zM8.400 9c-.1.200.1.400.3.400h7.800c.2 0 .5-.2.500-.4l.3-.9c.1-.2-.1-.4-.3-.4H9.200c-.2 0-.5.200-.5.400z" fill="#222" fill-rule="evenodd"/></svg></span></td><td>2021-<br>07-28</td><td>DET2016282</td><td>1600<br>Saratoga<br>Ave, San<br>Jose, CA<br>95129,<br>United<br>States</td><td>Driver A</td><td>Partially<br>Completed</td><td><span class="tag" style="background:#f0ad4e">Partially completed</span></td><td>DET2016282</td><td>37.2923813</td><td>-121.9876668</td><td></td><td></td><td></td><td></td><td></td><td></td><td></td><td></td><td></td><td></td><td></td><td></td><td></td><td></td></tr></tbody></table></div><!--/TABLE-->
    </div>
  </div>
</div>
<div id="leftline"></div><div id="topline"></div>
</body>
</html>
